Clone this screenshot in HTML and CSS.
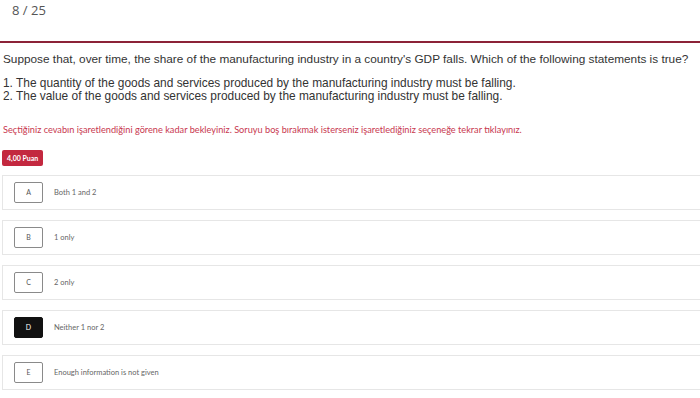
FILE: index.html
```html
<!DOCTYPE html>
<html lang="tr">
<head>
  <meta charset="UTF-8">
  <meta name="viewport" content="width=device-width, initial-scale=1">
  <title>Soru 8 / 25</title>
  <link rel="stylesheet" href="styles.css">
</head>
<body>

  <div class="sayac">8 / 25</div>
  <div class="cizgi"></div>

  <div class="soru">
    <p class="soru-metni">Suppose that, over time, the share of the manufacturing industry in a country's GDP falls. Which of the following statements is true?</p>
    <p class="ifadeler">1. The quantity of the goods and services produced by the manufacturing industry must be falling.<br>2. The value of the goods and services produced by the manufacturing industry must be falling.</p>
  </div>

  <p class="uyari">Seçtiğiniz cevabın işaretlendiğini görene kadar bekleyiniz. Soruyu boş bırakmak isterseniz işaretlediğiniz seçeneğe tekrar tıklayınız.</p>

  <span class="puan">4,00 Puan</span>

  <div class="secenekler">
    <div class="secenek"><span class="harf">A</span><span class="cevap">Both 1 and 2</span></div>
    <div class="secenek"><span class="harf">B</span><span class="cevap">1 only</span></div>
    <div class="secenek"><span class="harf">C</span><span class="cevap">2 only</span></div>
    <div class="secenek secili"><span class="harf">D</span><span class="cevap">Neither 1 nor 2</span></div>
    <div class="secenek"><span class="harf">E</span><span class="cevap">Enough information is not given</span></div>
  </div>

</body>
</html>
```

FILE: styles.css
```css
body {
  margin: 0;
  background: #fff;
  font-family: 'Liberation Sans', Arial, sans-serif;
  color: #333;
}
.sayac {
  font-family: 'Open Sans', sans-serif;
  font-size: 13px;
  line-height: 20px;
  color: #555;
  padding: 0 0 0 12px;
}
.cizgi {
  height: 2px;
  margin-top: 21px;
  background-color: #8c2338;
}
.soru {
  padding: 0 3px;
}
.soru-metni {
  margin: 9px 0 0;
  font-size: 11.8px;
  line-height: 15px;
  white-space: nowrap;
}
.ifadeler {
  margin: 10px 0 0;
  font-size: 11.9px;
  line-height: 12.5px;
}
.uyari {
  margin: 23px 0 0;
  padding: 0 3px;
  font-family: Lato, sans-serif;
  font-size: 9.2px;
  line-height: 10px;
  color: #c8384f;
}
.puan {
  display: inline-block;
  margin: 15px 0 0 2px;
  padding: 0 5px;
  height: 16px;
  line-height: 16px;
  border-radius: 2px;
  background-color: #c3283f;
  color: #fff;
  font-family: Lato, sans-serif;
  font-size: 7px;
  font-weight: bold;
}
.secenekler {
  margin-top: 9px;
  padding-left: 2px;
}
.secenek {
  display: flex;
  align-items: center;
  height: 33px;
  margin-bottom: 10px;
  border: 1px solid #e6e6e6;
  border-right: none;
  padding-left: 11px;
  font-family: Lato, sans-serif;
}
.harf {
  width: 27px;
  height: 19px;
  line-height: 19px;
  border: 1px solid #8a8a8a;
  border-radius: 2px;
  text-align: center;
  font-size: 7px;
  color: #555;
}
.secili .harf {
  background-color: #111;
  border-color: #111;
  color: #fff;
}
.cevap {
  margin-left: 11px;
  font-size: 7.5px;
  color: #666;
}
```
